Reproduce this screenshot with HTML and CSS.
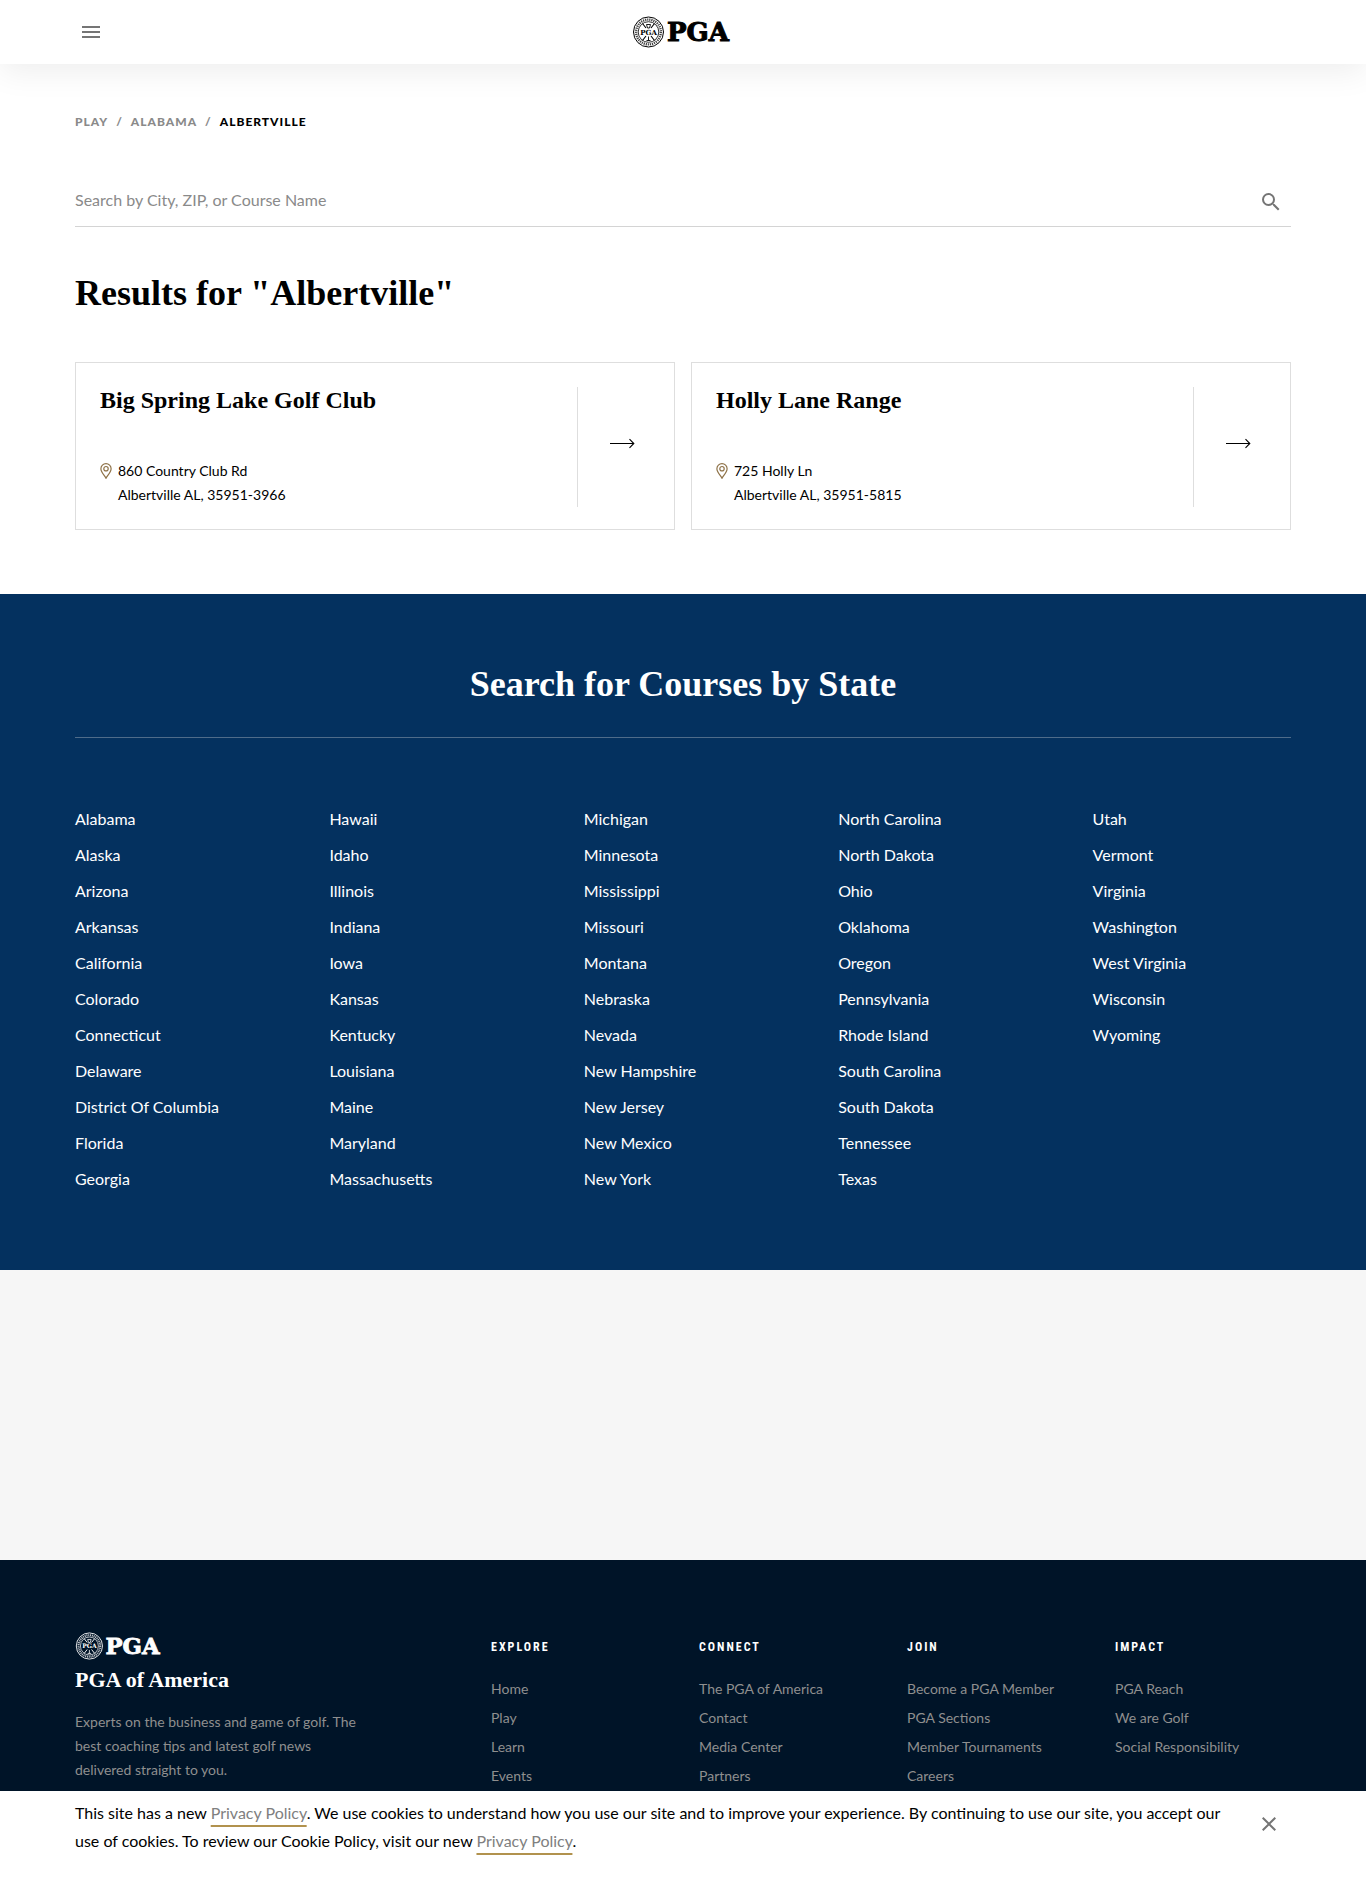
FILE: index.html
```html
<!DOCTYPE html>
<html lang="en">
<head>
<meta charset="utf-8">
<meta name="viewport" content="width=device-width, initial-scale=1">
<title>Golf Courses in Albertville, Alabama | PGA of America</title>
<link rel="stylesheet" href="styles.css">
</head>
<body>
<svg class="sprite" aria-hidden="true">
  <symbol id="pga-logo" viewBox="0 0 102 32">
    <g fill="none" stroke="currentColor">
      <circle cx="16.500" cy="16" r="15" stroke-width="1"/>
      <circle cx="16.500" cy="16" r="12.400" stroke-width="2.400" stroke-dasharray="1.200 .9" opacity=".75"/>
      <circle cx="16.500" cy="16" r="10.300" stroke-width=".8"/>
      <path d="M10.500 7.500 14 12M22.500 7.500 19 12M10.500 24.500 14 20M22.500 24.500 19 20" stroke-width="1.100"/>
      <path d="M14.500 8.500h4l-1 3.500h-2zM16.500 20.500v4M14.500 24.500h4" stroke-width=".9"/>
    </g>
    <text class="seal-text" x="16.500" y="18.700" text-anchor="middle">PGA</text>
    <text class="wordmark" x="35" y="40">PGA</text>
  </symbol>
  <symbol id="pin" viewBox="0 0 12 16">
    <path d="M6 15.300C4.500 12.300 .9 9.300 .9 5.700a5.100 5.100 0 0 1 10.200 0C11.100 9.300 7.500 12.300 6 15.300z" fill="none" stroke="currentColor" stroke-width="1.200"/>
    <circle cx="6" cy="5.700" r="2.200" fill="none" stroke="currentColor" stroke-width="1.200"/>
  </symbol>
  <symbol id="arrow" viewBox="0 0 26 12">
    <path d="M1 6.500h23.500" fill="none" stroke="currentColor" stroke-width="1"/>
    <path d="M20.500 2.200 24.800 6.500 20.500 10.800" fill="none" stroke="currentColor" stroke-width="1.100"/>
  </symbol>
</svg>

<header class="site-header">
  <div class="container header-row">
    <button class="icon-button menu-button" type="button" aria-label="Open menu">
      <svg width="24" height="24" viewBox="0 0 24 24"><path fill="currentColor" d="M3 18h18v-2H3v2zm0-5h18v-2H3v2zm0-7v2h18V6H3z"/></svg>
    </button>
    <a class="header-logo" href="#" aria-label="PGA home"><svg class="logo"><use href="#pga-logo"/></svg></a>
  </div>
</header>

<main>
  <section class="container results">
    <nav aria-label="Breadcrumb">
      <ol class="breadcrumb">
        <li><a href="#">Play</a></li>
        <li><a href="#">Alabama</a></li>
        <li aria-current="page">Albertville</li>
      </ol>
    </nav>
    <form class="search">
      <input class="search-input" type="text" aria-label="Search courses" placeholder="Search by City, ZIP, or Course Name">
      <button class="icon-button" type="submit" aria-label="Search">
        <svg width="24" height="24" viewBox="0 0 24 24"><path fill="currentColor" d="M15.500 14h-.79l-.28-.27A6.471 6.471 0 0 0 16 9.500 6.500 6.500 0 1 0 9.500 16c1.610 0 3.090-.59 4.230-1.570l.27.28v.79l5 4.990L20.490 19l-4.990-5zm-6 0C7.010 14 5 11.990 5 9.500S7.010 5 9.500 5 14 7.010 14 9.500 11.990 14 9.500 14z"/></svg>
      </button>
    </form>
    <h1 class="title">Results for "Albertville"</h1>
    <div class="cards">
      <a class="card" href="#">
        <div class="card-body">
          <h2 class="card-title">Big Spring Lake Golf Club</h2>
          <div class="place">
            <svg class="pin"><use href="#pin"/></svg>
            <address>860 Country Club Rd<br>Albertville AL, 35951-3966</address>
          </div>
        </div>
        <div class="card-arrow"><svg class="arrow"><use href="#arrow"/></svg></div>
      </a>
      <a class="card" href="#">
        <div class="card-body">
          <h2 class="card-title">Holly Lane Range</h2>
          <div class="place">
            <svg class="pin"><use href="#pin"/></svg>
            <address>725 Holly Ln<br>Albertville AL, 35951-5815</address>
          </div>
        </div>
        <div class="card-arrow"><svg class="arrow"><use href="#arrow"/></svg></div>
      </a>
    </div>
  </section>

  <section class="states">
    <div class="container">
      <h2 class="title states-title">Search for Courses by State</h2>
      <ul class="state-list">
        <li><a href="#">Alabama</a></li>
        <li><a href="#">Alaska</a></li>
        <li><a href="#">Arizona</a></li>
        <li><a href="#">Arkansas</a></li>
        <li><a href="#">California</a></li>
        <li><a href="#">Colorado</a></li>
        <li><a href="#">Connecticut</a></li>
        <li><a href="#">Delaware</a></li>
        <li><a href="#">District Of Columbia</a></li>
        <li><a href="#">Florida</a></li>
        <li><a href="#">Georgia</a></li>
        <li><a href="#">Hawaii</a></li>
        <li><a href="#">Idaho</a></li>
        <li><a href="#">Illinois</a></li>
        <li><a href="#">Indiana</a></li>
        <li><a href="#">Iowa</a></li>
        <li><a href="#">Kansas</a></li>
        <li><a href="#">Kentucky</a></li>
        <li><a href="#">Louisiana</a></li>
        <li><a href="#">Maine</a></li>
        <li><a href="#">Maryland</a></li>
        <li><a href="#">Massachusetts</a></li>
        <li><a href="#">Michigan</a></li>
        <li><a href="#">Minnesota</a></li>
        <li><a href="#">Mississippi</a></li>
        <li><a href="#">Missouri</a></li>
        <li><a href="#">Montana</a></li>
        <li><a href="#">Nebraska</a></li>
        <li><a href="#">Nevada</a></li>
        <li><a href="#">New Hampshire</a></li>
        <li><a href="#">New Jersey</a></li>
        <li><a href="#">New Mexico</a></li>
        <li><a href="#">New York</a></li>
        <li><a href="#">North Carolina</a></li>
        <li><a href="#">North Dakota</a></li>
        <li><a href="#">Ohio</a></li>
        <li><a href="#">Oklahoma</a></li>
        <li><a href="#">Oregon</a></li>
        <li><a href="#">Pennsylvania</a></li>
        <li><a href="#">Rhode Island</a></li>
        <li><a href="#">South Carolina</a></li>
        <li><a href="#">South Dakota</a></li>
        <li><a href="#">Tennessee</a></li>
        <li><a href="#">Texas</a></li>
        <li><a href="#">Utah</a></li>
        <li><a href="#">Vermont</a></li>
        <li><a href="#">Virginia</a></li>
        <li><a href="#">Washington</a></li>
        <li><a href="#">West Virginia</a></li>
        <li><a href="#">Wisconsin</a></li>
        <li><a href="#">Wyoming</a></li>
      </ul>
    </div>
  </section>

  <aside class="ad-slot"></aside>
</main>

<footer class="site-footer">
  <div class="container footer-grid">
    <div class="footer-about">
      <svg class="logo logo-small" role="img" aria-label="PGA"><use href="#pga-logo"/></svg>
      <h2 class="footer-name">PGA of America</h2>
      <p class="footer-text">Experts on the business and game of golf. The best coaching tips and latest golf news delivered straight to you.</p>
    </div>
    <nav class="footer-nav" aria-labelledby="nav-explore">
      <h3 id="nav-explore">Explore</h3>
      <ul>
        <li><a href="#">Home</a></li>
        <li><a href="#">Play</a></li>
        <li><a href="#">Learn</a></li>
        <li><a href="#">Events</a></li>
      </ul>
    </nav>
    <nav class="footer-nav" aria-labelledby="nav-connect">
      <h3 id="nav-connect">Connect</h3>
      <ul>
        <li><a href="#">The PGA of America</a></li>
        <li><a href="#">Contact</a></li>
        <li><a href="#">Media Center</a></li>
        <li><a href="#">Partners</a></li>
      </ul>
    </nav>
    <nav class="footer-nav" aria-labelledby="nav-join">
      <h3 id="nav-join">Join</h3>
      <ul>
        <li><a href="#">Become a PGA Member</a></li>
        <li><a href="#">PGA Sections</a></li>
        <li><a href="#">Member Tournaments</a></li>
        <li><a href="#">Careers</a></li>
      </ul>
    </nav>
    <nav class="footer-nav" aria-labelledby="nav-impact">
      <h3 id="nav-impact">Impact</h3>
      <ul>
        <li><a href="#">PGA Reach</a></li>
        <li><a href="#">We are Golf</a></li>
        <li><a href="#">Social Responsibility</a></li>
      </ul>
    </nav>
  </div>
</footer>

<div class="cookie-bar" role="region" aria-label="Cookie notice">
  <div class="container cookie-row">
    <p>This site has a new <a href="#">Privacy Policy</a>. We use cookies to understand how you use our site and to improve your experience. By continuing to use our site, you accept our use of cookies. To review our Cookie Policy, visit our new <a href="#">Privacy Policy</a>.</p>
    <button class="icon-button" type="button" aria-label="Close">
      <svg width="24" height="24" viewBox="0 0 24 24"><path fill="currentColor" d="M19 6.410 17.590 5 12 10.590 6.410 5 5 6.410 10.590 12 5 17.590 6.410 19 12 13.410 17.590 19 19 17.590 13.410 12z"/></svg>
    </button>
  </div>
</div>
</body>
</html>
```
FILE: styles.css
```css
* {
  box-sizing: border-box;
}

body {
  margin: 0;
  min-height: 100vh;
  display: flex;
  flex-direction: column;
  background: #fff;
  color: #000;
  font: 16px/20px Lato, "Open Sans", sans-serif;
}

h1, h2, h3, p, ul, ol {
  margin: 0;
  padding: 0;
}

h1, h2 {
  font-family: "Source Serif Pro", "Liberation Serif", serif;
  font-weight: 700;
}

ul, ol {
  list-style: none;
}

a {
  color: inherit;
  text-decoration: none;
}

address {
  font-style: normal;
}

.sprite {
  display: none;
}

.container {
  width: 100%;
  max-width: 1248px;
  margin: 0 auto;
  padding: 0 16px;
}

.icon-button {
  display: flex;
  padding: 4px;
  border: 0;
  background: none;
  color: #757575;
  cursor: pointer;
}

/* Header */
.site-header {
  position: relative;
  background: #fff;
  box-shadow: 0 8px 32px rgba(0, 0, 0, .07);
}

.header-row {
  display: grid;
  grid-template-columns: 1fr auto 1fr;
  align-items: center;
  height: 64px;
}

.menu-button {
  justify-self: start;
}

.header-logo {
  display: flex;
}

.logo {
  display: block;
  width: 102px;
  height: 32px;
}

.logo-small {
  width: 89px;
  height: 28px;
}

.seal-text {
  font: 700 7px "DejaVu Serif", serif;
  fill: currentColor;
}

.wordmark {
  font: 700 26px "DejaVu Serif", serif;
  fill: currentColor;
  stroke: currentColor;
  stroke-width: 1px;
  transform: translateY(-15px);
}

/* Results */
.results {
  padding-bottom: 64px;
}

.breadcrumb {
  display: flex;
  padding-top: 48px;
  color: #8a8a8a;
  font-size: 12px;
  font-weight: 900;
  letter-spacing: 1px;
  text-transform: uppercase;
}

.breadcrumb li + li::before {
  content: "/";
  margin: 0 8px;
  color: #8a8a8a;
}

.breadcrumb [aria-current] {
  color: #000;
}

.search {
  display: flex;
  align-items: flex-end;
  margin-top: 48px;
  padding-right: 4px;
  border-bottom: 1px solid #d4d4d4;
}

.search-input {
  flex: 1;
  min-width: 0;
  height: 46px;
  padding: 0 0 8px;
  border: 0;
  outline: 0;
  background: none;
  font: inherit;
}

.search .icon-button {
  margin-bottom: 8px;
}

.search-input::placeholder {
  color: #8a8a8a;
  opacity: 1;
}

.title {
  font-size: 36px;
  line-height: 48px;
}

.results .title {
  margin-top: 42px;
}

.cards {
  display: grid;
  grid-template-columns: repeat(2, 1fr);
  gap: 16px;
  margin-top: 45px;
}

.card {
  display: flex;
  padding: 24px 0 22px;
  border: 1px solid #dedede;
}

.card-body {
  flex: 1;
  display: flex;
  flex-direction: column;
  justify-content: space-between;
  min-height: 120px;
  padding-left: 24px;
}

.card-title {
  font-size: 24px;
  line-height: 26px;
}

.place {
  display: flex;
  gap: 6px;
  font-size: 14px;
  line-height: 24px;
}

.pin {
  width: 12px;
  height: 16px;
  margin-top: 4px;
  color: #8f7349;
}

.card-arrow {
  display: flex;
  align-items: center;
  justify-content: center;
  width: 97px;
  padding: 0 8px 8px 0;
  border-left: 1px solid #dedede;
}

.arrow {
  width: 26px;
  height: 12px;
}

/* States */
.states {
  padding: 66px 0 80px;
  background: #04315f;
  color: #fff;
}

.states-title {
  padding-bottom: 29px;
  border-bottom: 1px solid #4f6c8a;
  text-align: center;
}

.state-list {
  display: grid;
  grid-template-rows: repeat(11, 20px);
  grid-template-columns: repeat(5, 1fr);
  grid-auto-flow: column;
  gap: 16px 56px;
  padding: 71px 0 1px;
}

.ad-slot {
  height: 290px;
  background: #f6f6f6;
}

/* Footer */
.site-footer {
  flex: 1;
  padding-top: 72px;
  background: #001428;
  color: #fff;
}

.footer-grid {
  display: grid;
  grid-template-columns: repeat(6, 1fr);
  gap: 32px;
  font-size: 14px;
}

.footer-about {
  grid-column: span 2;
}

.footer-name {
  margin-top: 8px;
  font-size: 22px;
  line-height: 24px;
}

.footer-text {
  max-width: 296px;
  margin-top: 18px;
  color: #8f8f8f;
  line-height: 24px;
}

.footer-nav h3 {
  margin: 5px 0 22px;
  font: 700 12px/20px "Roboto Condensed", "Liberation Sans Narrow", Roboto, sans-serif;
  letter-spacing: 2px;
  text-transform: uppercase;
}

.footer-nav ul {
  display: grid;
  gap: 9px;
  color: #8f8f8f;
  white-space: nowrap;
}

/* Cookie notice stays above the page */
.cookie-bar {
  position: fixed;
  right: 0;
  bottom: 0;
  left: 0;
  padding: 8px 0 41px;
  background: #fff;
  line-height: 28px;
}

.cookie-row {
  display: flex;
  align-items: flex-start;
  justify-content: space-between;
  gap: 12px;
}

.cookie-row p {
  max-width: 1168px;
}

.cookie-row a {
  color: #808080;
  text-decoration: underline 2px #b1924e;
  text-decoration-skip-ink: none;
  text-underline-offset: 6px;
}

.cookie-row .icon-button {
  margin: 9px 6px 0 0;
}
```
